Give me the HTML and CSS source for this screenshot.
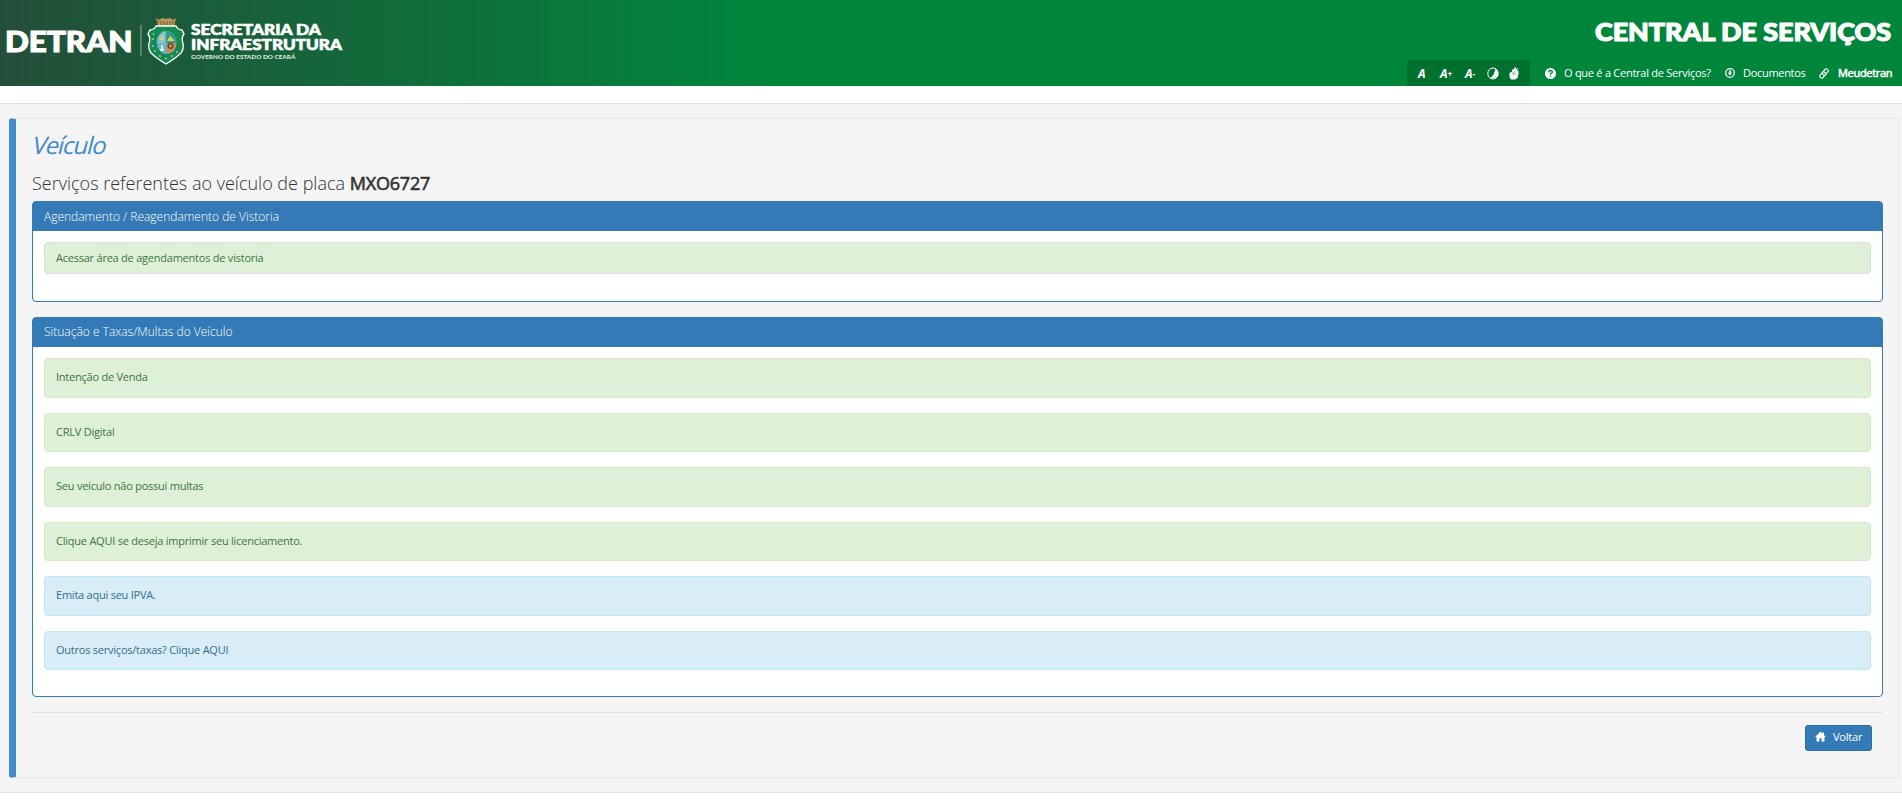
FILE: index.html
```
<!DOCTYPE html>
<html lang="pt-BR">
<head>
<meta charset="utf-8">
<title>Central de Serviços</title>
<link rel="stylesheet" href="styles.css">
</head>
<body>
<header class="header">
  <svg class="logo" width="360" height="86" viewBox="0 0 360 86">
    <text class="logo-text heavy" x="5" y="51.800" font-size="28.500" textLength="127.500" lengthAdjust="spacingAndGlyphs">DETRAN</text>
    <path d="M141 25v31" stroke="#fff" stroke-opacity=".35" stroke-width="1.500"/>
    <path d="M156 18l3 2 3-2 4 1 4-1 3 2 3-2-2 8h-16z" fill="#b99a5b"/>
    <path d="M157 22h18M160 24h13" stroke="#6d572c" stroke-width="1" stroke-dasharray="2 1"/>
    <path d="M150 30q4 0 6-4h20q2 4 6 4l2 4q-3 4-1 9 1 6-2 10-5 5-15 11-10-6-15-11-3-4-2-10 2-5-1-9z" fill="#178a50" stroke="#fff" stroke-width="1.300"/>
    <ellipse cx="166.500" cy="42.500" rx="10" ry="11.500" fill="#4da5b8"/>
    <path d="M157.500 38q3-6 8-7v12h-8z" fill="#86c4cf"/>
    <path d="M160 40l2-6 2 6z" fill="#e1cb70"/>
    <path d="M166.500 43V31q7 1 9.500 9v3z" fill="#2d9b83"/>
    <path d="M167 41l3-5 5 5z" fill="#f0ca52"/>
    <path d="M157 43h9.500v11q-8-1-9.500-11z" fill="#69b6c4"/>
    <path d="M166.500 43h10q-1 10-10 11z" fill="#c98d5c"/>
    <circle cx="170.500" cy="46" r="2.400" fill="none" stroke="#57402f" stroke-width="1.300"/>
    <path d="M162 45v6M160 50h4" stroke="#fff" stroke-width="1.400"/>
    <g fill="#e8f5ec"><circle cx="153.500" cy="34" r=".8"/><circle cx="153" cy="39" r=".8"/><circle cx="153" cy="46" r=".8"/><circle cx="155" cy="51" r=".8"/><circle cx="160" cy="56" r=".8"/><circle cx="166" cy="58.500" r=".8"/><circle cx="172" cy="56" r=".8"/><circle cx="177" cy="52" r=".8"/></g>
    <text class="logo-text" x="191" y="35.300" font-size="14.300" textLength="130" lengthAdjust="spacingAndGlyphs">SECRETARIA DA</text>
    <text class="logo-text" x="191" y="50" font-size="14.300" textLength="151" lengthAdjust="spacingAndGlyphs">INFRAESTRUTURA</text>
    <text class="logo-small" x="191" y="58.500" font-size="5.600" textLength="104.500" lengthAdjust="spacingAndGlyphs">GOVERNO DO ESTADO DO CEARÁ</text>
  </svg>
  <div class="header-right">
    <svg class="brand" width="300" height="52" viewBox="0 0 300 52"><text class="logo-text heavy" x="3" y="41.300" font-size="24" textLength="296" lengthAdjust="spacingAndGlyphs">CENTRAL DE SERVIÇOS</text></svg>
    <nav class="nav">
      <div class="access">
        <b class="a1">A</b><b class="a2">A<small>+</small></b><b class="a3">A<small>-</small></b>
        <svg class="contrast" width="12" height="13" viewBox="0 0 12 13"><ellipse cx="6" cy="6.500" rx="5.200" ry="5.500" fill="none" stroke="#fff"/><path d="M8.500 1.500Q12 4 11 8t-8 3q4-2 5.500-9.500z" fill="#fff"/></svg>
        <svg class="hands" width="10" height="13" viewBox="0 0 10 13"><path d="M.5 6l2.500-1.500.5-2.500 1 .5L6 0l1 .5L6.500 3 8.500.8l.5.7L8 4l1.500-.5V7L8.500 11 6 12.500H2L.5 10z" fill="#fff"/><path d="M3 6.500l3-2M4 8l3-2" stroke="#00702f" stroke-width=".5"/></svg>
      </div>
      <a class="link l1"><svg width="11" height="11" viewBox="0 0 10 10"><circle cx="5" cy="5" r="5" fill="#fff"/><path d="M3.300 3.900Q3.500 2.300 5 2.300t1.700 1.300Q6.700 4.500 5 5.200V6M5 6.800V8" fill="none" stroke="#00863b" stroke-width="1.300"/></svg><span>O que é a Central de Serviços?</span></a>
      <a class="link l2"><svg width="10" height="10" viewBox="0 0 10 10"><circle cx="5" cy="5" r="4.300" fill="none" stroke="#fff" stroke-width="1.300"/><path d="M4.200 2.300h1.600v2.500h1.500L5 7.600 2.700 4.800h1.500z" fill="#fff"/></svg><span>Documentos</span></a>
      <a class="link l3"><svg width="10" height="11" viewBox="0 0 10 11" fill="none" stroke="#fff" stroke-width="1.100"><rect x="-1.900" y="-3.400" width="3.800" height="6.800" rx="1.800" transform="translate(6.300 4) rotate(38)"/><rect x="-1.900" y="-3.400" width="3.800" height="6.800" rx="1.800" transform="translate(3.700 7) rotate(38)"/></svg><span>Meudetran</span></a>
    </nav>
  </div>
</header>
<main class="page">
  <section class="well">
    <h1 class="title">Veículo</h1>
    <h2 class="subtitle">Serviços referentes ao veículo de placa <strong>MXO6727</strong></h2>
    <div class="panel">
      <div class="panel-heading first">Agendamento / Reagendamento de Vistoria</div>
      <div class="panel-body"><a class="alert item">Acessar área de agendamentos de vistoria</a></div>
    </div>
    <div class="panel">
      <div class="panel-heading">Situação e Taxas/Multas do Veículo</div>
      <div class="panel-body">
        <a class="alert">Intenção de Venda</a>
        <a class="alert">CRLV Digital</a>
        <a class="alert">Seu veículo não possui multas</a>
        <a class="alert">Clique AQUI se deseja imprimir seu licenciamento.</a>
        <a class="alert info">Emita aqui seu IPVA.</a>
        <a class="alert info">Outros serviços/taxas? Clique AQUI</a>
      </div>
    </div>
    <div class="actions">
      <a class="btn"><svg width="11" height="11" viewBox="0 0 12 11"><path d="M6 0l2.300 2.300V1h1.500v2.800L12 6h-1.700v5H7.200V7.500H4.800V11H1.700V6H0z" fill="#fff"/></svg><span>Voltar</span></a>
    </div>
  </section>
</main>
</body>
</html>
```
FILE: styles.css
```
* { box-sizing: border-box; }
body { margin: 0; background: #fff; font-family: "Open Sans", sans-serif; font-size: 11px; letter-spacing: -.23px; overflow: hidden; }
.header { height: 86px; display: flex; justify-content: space-between; background: linear-gradient(to right, #244e3a 0, #00863b 760px); color: #fff; }
.logo, .brand { display: block; letter-spacing: 0; }
.logo-text { font-family: "Lato", sans-serif; font-weight: 900; fill: #fff; stroke: #fff; stroke-width: .6px; }
.heavy { stroke-width: 1.100px; }
.logo-small { font-family: "Lato", sans-serif; font-weight: 900; fill: #d9e8de; }
.header-right { display: flex; flex-direction: column; align-items: flex-end; justify-content: space-between; padding-right: 10px; }
.nav { display: flex; height: 26px; }
.access { width: 123px; background: #00702f; border-radius: 4px 4px 0 0; display: flex; align-items: center; padding-left: 11px; font-style: italic; font-size: 12px; letter-spacing: 0; }
.access b { font-weight: 700; white-space: nowrap; }
.access small { font-size: 8px; vertical-align: 1px; }
.a1 { width: 22px; }
.a2 { width: 25px; }
.a3 { width: 22px; }
.contrast { margin-right: 10px; }
.link { display: flex; align-items: center; gap: 8px; white-space: nowrap; }
.link span { padding-bottom: 1px; }
.l1 { margin-left: 15px; letter-spacing: -.26px; }
.l1 span { width: 147px; }
.l2, .l3 { margin-left: 14px; letter-spacing: -.3px; }
.l2 span { width: 62px; }
.l3 { gap: 9px; -webkit-text-stroke: .5px #fff; }
.l3 span { width: 54px; }
.page { margin-top: 17px; height: 690px; background: #f4f4f4; border-top: 1px solid #dedede; border-bottom: 1px solid #e0e0e0; padding: 14px 3px 0 9px; }
.well { height: 660px; border: 1px solid #ececec; border-left: 7px solid #428bca; border-radius: 3px; padding: 0 15px 0 16px; background: #f5f5f5; }
.title { width: max-content; margin: 0 0 0 1px; height: 53px; line-height: 51px; font-size: 24px; letter-spacing: -1.050px; font-weight: 400; transform: skewX(-14deg); color: #428bca; }
.subtitle { margin: 0; height: 29px; line-height: 22px; font-size: 18px; letter-spacing: 0; font-weight: 300; color: #333; }
.subtitle strong { font-weight: 400; letter-spacing: -.2px; -webkit-text-stroke: .6px #333; }
.panel { border: 1px solid #337ab7; border-radius: 4px; background: #fff; margin-bottom: 15px; }
.panel-heading { height: 29px; line-height: 28px; padding-left: 11px; background: #337ab7; color: #fff; font-size: 12px; letter-spacing: 0; font-weight: 300; }
.first { line-height: 30px; }
.panel-body { padding: 11px; }
.alert { display: block; height: 39.500px; line-height: 35.500px; margin-bottom: 15px; border: 1px solid #d6e9c6; border-radius: 4px; background: #dff0d8; color: #3c763d; padding-left: 11px; }
.item { height: 32px; line-height: 30px; border-color: #ddd; margin-bottom: 16px; }
.info { background: #d9edf7; border-color: #bce8f1; color: #31708f; }
.actions { border-top: 1px solid #e2e2e2; display: flex; justify-content: flex-end; padding: 12px 11px 0 0; }
.btn { width: 67px; height: 26px; background: #337ab7; border: 1px solid #2e6da4; border-radius: 3px; color: #fff; display: flex; align-items: flex-start; padding: 5px 0 0 9px; gap: 7px; }
.btn span { line-height: 11px; letter-spacing: -.2px; }
```
